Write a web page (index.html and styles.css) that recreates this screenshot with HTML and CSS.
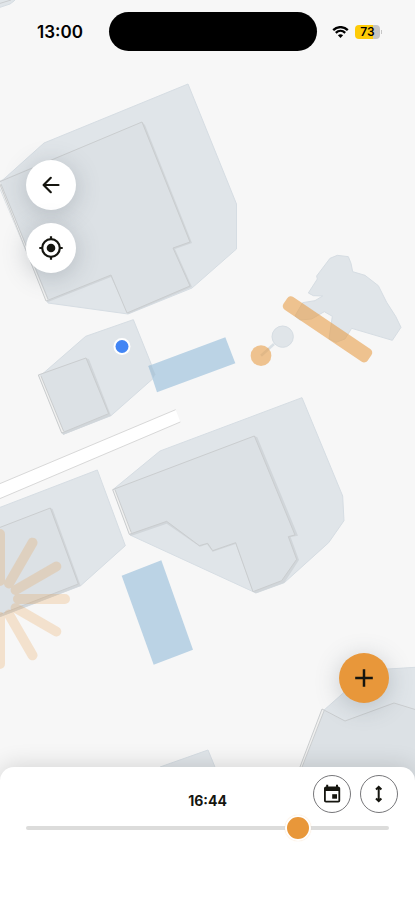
FILE: index.html
```html
<!DOCTYPE html>
<html lang="en">
<head>
<meta charset="utf-8">
<meta name="viewport" content="width=device-width, initial-scale=1">
<title>Shadow map</title>
<link rel="stylesheet" href="styles.css">
</head>
<body>
<div class="screen">
  <svg class="map" viewBox="0 0 415 900" preserveAspectRatio="xMidYMin slice" aria-hidden="true">
    <!-- building at the top edge -->
    <g>
      <path class="shade" d="M-2 8V-2H17L14 1 10 4Z"/>
      <path class="edge" d="M-2 4L11 0"/>
    </g>
    <!-- large building -->
    <g>
      <path class="shade" d="M188 84L236.500 204V249L192 288 128 314 48 303 -2 184 5 178 44 143Z"/>
      <path class="wall" d="M142 122L145 125 192 243 175 249 192 287 128 314 111 277 48 302 46 301V299L111 275Z"/>
      <path class="roof" d="M-1 181L142 122 190 242 173 248 190 286 127 313 111 275 47 301Z"/>
      <path class="strip" d="M-2 183L0 182 48 301 46 301Z"/>
      <path class="edge" d="M-1 182L142 122 190 242 173 248 190 286 127 313 111 275 46 301ZM1 184L48 299"/>
    </g>
    <!-- small house -->
    <g transform="translate(0 310) scale(.33333)">
      <path class="shade" d="M400 29L466 193 460 205 333 317 190 373 118 200 257 79Z"/>
      <path class="wall" d="M258 144L267 148 333 317 190 374 185 368Z"/>
      <path class="roof" d="M115 195L258 144 326 311 185 369Z"/>
      <path class="strip" d="M115 195L123 198 192 366 185 369Z"/>
      <path class="edge" d="M115 195L258 144 326 311 185 369ZM123 198L191 364"/>
      <path class="road" d="M-10 525L527 299 541 336 -10 570Z"/>
      <path class="kerb" d="M-10 525L527 299M541 336L-10 570"/>
      <path class="water" d="M445 168L676 82 706 160 471 247Z"/>
      <path class="water-shade" d="M445 168L454 165 466 193 460 205Z"/>
    </g>
    <!-- central building -->
    <g transform="translate(100 380) scale(.33333)">
      <path class="shade" d="M606 53L728 348 732 422 686 488 553 608 468 639 90 465 40 328 180 213Z"/>
      <path class="wall" d="M463 168L472 172 594 467 572 471 597 540 553 608 467 640 459 635 407 492 338 515 321 493 300 500 200 431 93 468 88 463Z"/>
      <path class="roof" d="M38 329L463 168 585 465 565 470 590 538 545 602 459 635 407 488 338 512 323 490 298 497 200 424 88 463Z"/>
      <path class="strip" d="M38 329L45 329 95 460 88 463Z"/>
      <path class="edge" d="M38 329L463 168 585 465 565 470 590 538 545 602 459 635 407 488 338 512 323 490 298 497 200 424 88 463ZM45 329L94 458"/>
    </g>
    <!-- left house -->
    <g transform="translate(0 450) scale(.33333)">
      <path class="shade" d="M-10 176L292 60 376 287 242 407 -10 504Z"/>
      <path class="wall" d="M151 174L158 177 242 407 -10 504V490Z"/>
      <path class="roof" d="M-10 236L151 174 235 402 -10 497Z"/>
      <path class="edge" d="M-10 236L151 174 235 402 -10 497"/>
      <path class="water" d="M365 377L484 331 579 599 461 644Z"/>
    </g>
    <!-- trees -->
    <g transform="translate(230 240) scale(.33333)">
      <path class="shade" d="M322 46L355 50 363 70 368 95 405 106 445 137 470 187 497 229 513 262 487 301 365 265 345 297 318 307 297 297 307 229 283 215 245 237 210 240 195 228 218 188 255 182 278 168 250 167 235 159 262 117 260 108 300 55Z"/>
      <path class="stem" d="M93 347L132 312"/>
      <circle class="shade" cx="158" cy="290" r="32"/>
      <rect class="marker" x="140" y="245" width="305" height="46" rx="13" transform="rotate(34 292.5 268)"/>
      <circle class="marker" cx="93" cy="347" r="31"/>
    </g>
    <!-- sun rays -->
    <g class="sun" transform="translate(0 599)">
      <path d="M18 0H65M15.6 9L56.3 32.5M9 15.6L32.5 56.3M0 18V65M15.6 -9L56.3 -32.5M9 -15.6L32.5 -56.3M0 -18V-65"/>
    </g>
    <!-- lower buildings -->
    <g>
      <path class="shade" d="M420 667L388 669 368 671 323 711 300 770H420Z"/>
      <path class="roof" d="M324 711L345 721 394 703 420 711V780H298Z"/>
      <path class="strip" d="M322 709L324 711 297 780H295Z"/>
      <path class="edge" d="M295 780L322 709 345 721 394 703 420 711M324 711L297 780"/>
      <path class="shade" d="M160 767L208 750 217 772H160Z"/>
    </g>
    <circle cx="122" cy="346.5" r="8.5" fill="#fff"/>
    <circle cx="122" cy="346.5" r="6.5" fill="#4285f4"/>
  </svg>

  <header class="status">
    <time class="clock">13:00</time>
    <div class="island"></div>
    <div class="indicators">
      <svg class="wifi" viewBox="0 0 17 12" role="img" aria-label="Wi-Fi">
        <path d="M1.2 4.1C5.3 .1 11.7 .1 15.8 4.1M3.8 6.8C6.5 4.3 10.5 4.3 13.2 6.8" fill="none" stroke="#000" stroke-width="2.300"/>
        <path d="M8.5 12L5.9 9.3C7.4 8 9.6 8 11.1 9.3Z"/>
      </svg>
      <div class="battery"><span class="level">73</span></div>
    </div>
  </header>

  <main class="overlay">
    <div class="tools">
      <button class="round" type="button" aria-label="Back">
        <svg width="24" height="24" viewBox="0 0 24 24"><path d="M19.500 12H4.800M11.800 4.800L4.600 12 11.800 19.200" fill="none" stroke="#15150f" stroke-width="2.200" stroke-linecap="round" stroke-linejoin="round"/></svg>
      </button>
      <button class="round" type="button" aria-label="My location">
        <svg width="24" height="24" viewBox="0 0 24 24"><circle cx="12" cy="12" r="4.3" fill="#15150f"/><circle cx="12" cy="12" r="8.8" fill="none" stroke="#15150f" stroke-width="2.200"/><path d="M12 .3V4M12 20V23.700M.3 12H4M20 12H23.700" stroke="#15150f" stroke-width="2.200"/></svg>
      </button>
    </div>
    <button class="round add" type="button" aria-label="Add">
      <svg width="24" height="24" viewBox="0 0 24 24"><path d="M12 3.200V20.800M3.200 12H20.800" stroke="#15150f" stroke-width="2.500"/></svg>
    </button>
  </main>

  <section class="sheet">
    <div class="sheet-head">
      <label class="time" for="time">16:44</label>
      <div class="actions">
        <button class="outline" type="button" aria-label="Date">
          <svg width="20" height="20" viewBox="0 0 20 20"><path fill-rule="evenodd" d="M4.200 .8H6.200V2.500H14V.8H16V2.500C17.500 2.500 18.200 3.500 18.200 4.500V16.500C18.200 17.800 17.500 18.500 16.200 18.500H4C2.700 18.500 2 17.800 2 16.500V4.500C2 3.500 2.500 2.500 4.200 2.500ZM3.800 7V16.700H16.400V7Z" fill="#15150f"/><path d="M10.200 10.200H15V14.700H10.200Z" fill="#15150f"/></svg>
        </button>
        <button class="outline" type="button" aria-label="Height">
          <svg width="20" height="20" viewBox="0 0 20 20"><path d="M9.700 4V16M7 5.500L9.700 2.900 12.400 5.500M7 14.500L9.700 17.100 12.400 14.500" fill="none" stroke="#15150f" stroke-width="2"/></svg>
        </button>
      </div>
    </div>
    <input class="slider" id="time" type="range" min="300" max="1216" value="1004">
  </section>
</div>
</body>
</html>
```
FILE: styles.css
```css
* {
  box-sizing: border-box;
}

body {
  margin: 0;
  font-family: Inter, "Liberation Sans", sans-serif;
  color: #15150f;
}

.screen {
  position: relative;
  display: flex;
  flex-direction: column;
  min-height: 100vh;
  overflow: hidden;
  background: #f7f7f7;
}

.map {
  position: absolute;
  inset: 0;
  width: 100%;
  height: 100%;
}

.shade {
  fill: #e0e5e9;
  stroke: #d6dde3;
  vector-effect: non-scaling-stroke;
}

.wall {
  fill: #d1d6da;
}

.roof {
  fill: #dce1e5;
}

.strip {
  fill: #f0f0ef;
}

.edge {
  fill: none;
  stroke: #cacdcf;
  vector-effect: non-scaling-stroke;
}

.road {
  fill: #fff;
}

.kerb {
  fill: none;
  stroke: #d8d8d8;
  vector-effect: non-scaling-stroke;
}

.water {
  fill: #bbd3e5;
}

.water-shade {
  fill: #b2c9da;
}

.stem {
  stroke: #d9e0e5;
  stroke-width: 8;
}

.marker {
  fill: #e8973a;
  opacity: 0.55;
}

.sun {
  fill: none;
  stroke: #e8973a;
  stroke-width: 10;
  stroke-linecap: round;
  opacity: 0.22;
}

.status {
  position: relative;
  display: grid;
  grid-template-columns: 1fr 208px 1fr;
  align-items: center;
  padding: 12px 0 0 11px;
}

.clock {
  text-align: center;
  font-size: 17px;
  font-weight: 600;
  color: #000;
}

.island {
  height: 39px;
  border-radius: 20px;
  background: #000;
}

.indicators {
  display: flex;
  align-items: center;
  gap: 6px;
  padding-left: 15px;
}

.wifi {
  width: 17px;
  height: 12px;
}

.battery {
  display: flex;
  align-items: center;
}

.battery::after {
  content: "";
  width: 1px;
  height: 4px;
  margin-left: 1px;
  background: #c6c6c6;
}

.level {
  width: 25px;
  border-radius: 4px;
  background: linear-gradient(90deg, #fecb07 73%, #c6c6c6 73%);
  font-size: 12px;
  font-weight: 600;
  line-height: 14px;
  text-align: center;
  color: #000;
}

.overlay {
  position: relative;
  flex: 1;
  display: flex;
  flex-direction: column;
  justify-content: space-between;
  padding: 109px 26px 64px;
}

.tools {
  display: flex;
  flex-direction: column;
  gap: 13px;
}

button {
  display: flex;
  align-items: center;
  justify-content: center;
  padding: 0;
  border: 0;
  border-radius: 50%;
  background: #fff;
}

.round {
  width: 50px;
  height: 50px;
  box-shadow: 0 4px 24px rgba(80, 90, 100, 0.28);
}

.add {
  align-self: flex-end;
  background: #e8973a;
}

.sheet {
  position: relative;
  padding: 8px 17px 59px;
  border-radius: 14px 14px 0 0;
  background: #fff;
  box-shadow: 0 0 24px rgba(0, 0, 0, 0.16);
}

.sheet-head {
  display: grid;
  grid-template-columns: 1fr auto 1fr;
  align-items: center;
}

.time {
  grid-column: 2;
  padding-top: 12px;
  font-size: 14px;
  font-weight: 700;
}

.actions {
  display: flex;
  justify-content: flex-end;
  gap: 9px;
}

.outline {
  width: 38px;
  height: 38px;
  border: 1px solid #77777a;
}

.slider {
  appearance: none;
  display: block;
  width: calc(100% - 18px);
  height: 26px;
  margin: 2px 9px 0;
  background: transparent;
}

.slider::-webkit-slider-runnable-track {
  height: 4px;
  border-radius: 2px;
  background: #dcdcdb;
}

.slider::-webkit-slider-thumb {
  appearance: none;
  width: 26px;
  height: 26px;
  margin-top: -11px;
  border: 2px solid #fff;
  border-radius: 50%;
  background: #e8973a;
  box-shadow: 0 0 1px rgba(232, 151, 58, 0.4);
}
```
